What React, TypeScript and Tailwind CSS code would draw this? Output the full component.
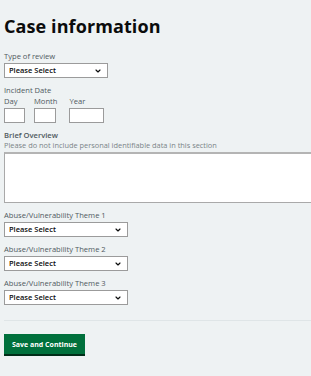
import { ChevronDown } from 'lucide-react'

function SelectBox({ width }: { width: string }) {
  return (
    <div className={`${width} h-[15px] bg-white border border-[#9b9b9b] flex items-center justify-between pl-[4px] pr-[5px]`}>
      <span className="text-[7.5px] font-semibold text-[#0b0c0c] leading-none">Please Select</span>
      <ChevronDown size={8} strokeWidth={3.5} className="text-[#0b0c0c]" />
    </div>
  )
}

export default function App() {
  const themes = ['Abuse/Vulnerability Theme 1', 'Abuse/Vulnerability Theme 2', 'Abuse/Vulnerability Theme 3']

  return (
    <div className="w-[311px] h-[376px] overflow-hidden bg-[#eef2f3] font-['Open_Sans',sans-serif] text-[#0b0c0c]">
      <div className="pl-[4px] pt-[16px]">
        <h1 className="text-[18px] leading-[20px] font-bold tracking-[0.1px]">Case information</h1>

        {/* Type of review */}
        <div className="mt-[16px]">
          <p className="text-[7.6px] leading-[9px] text-[#505a5f]">Type of review</p>
          <div className="mt-[2px]">
            <SelectBox width="w-[104px]" />
          </div>
        </div>

        {/* Incident Date */}
        <div className="mt-[8px]">
          <p className="text-[7.6px] leading-[9px] text-[#505a5f]">Incident Date</p>
          <div className="flex gap-[9px] mt-[2px]">
            <div className="flex flex-col gap-[2px]">
              <span className="text-[7.6px] leading-[9px] text-[#505a5f]">Day</span>
              <div className="w-[21px] h-[15px] bg-white border border-[#9b9b9b]" />
            </div>
            <div className="flex flex-col gap-[2px]">
              <span className="text-[7.6px] leading-[9px] text-[#505a5f]">Month</span>
              <div className="w-[22px] h-[15px] bg-white border border-[#9b9b9b]" />
            </div>
            <div className="flex flex-col gap-[2px] ml-[3px]">
              <span className="text-[7.6px] leading-[9px] text-[#505a5f]">Year</span>
              <div className="w-[35px] h-[15px] bg-white border border-[#9b9b9b]" />
            </div>
          </div>
        </div>

        {/* Brief Overview */}
        <div className="mt-[8px]">
          <p className="text-[7.6px] leading-[9px] font-semibold text-[#505a5f]">Brief Overview</p>
          <p className="text-[7.4px] leading-[9px] mt-[1px] text-[#7a8488]">
            Please do not include personal identifiable data in this section
          </p>
          <div className="mt-[2px] w-[330px] h-[51px] bg-white border border-[#a9a9a9] border-t-2 border-t-[#b4b4b4]" />
        </div>

        {/* Themes */}
        <div className="mt-[8px] flex flex-col gap-[8px]">
          {themes.map((t) => (
            <div key={t}>
              <p className="text-[7.6px] leading-[9px] text-[#505a5f]">{t}</p>
              <div className="mt-[2px]">
                <SelectBox width="w-[124px]" />
              </div>
            </div>
          ))}
        </div>

        <div className="mt-[15px] h-px bg-[#dfe5e7]" />

        <button className="mt-[13px] w-[81px] h-[20px] bg-[#00703c] shadow-[0_2px_0_#002d18] text-white text-[7px] font-bold leading-none">
          Save and Continue
        </button>
      </div>
    </div>
  )
}
